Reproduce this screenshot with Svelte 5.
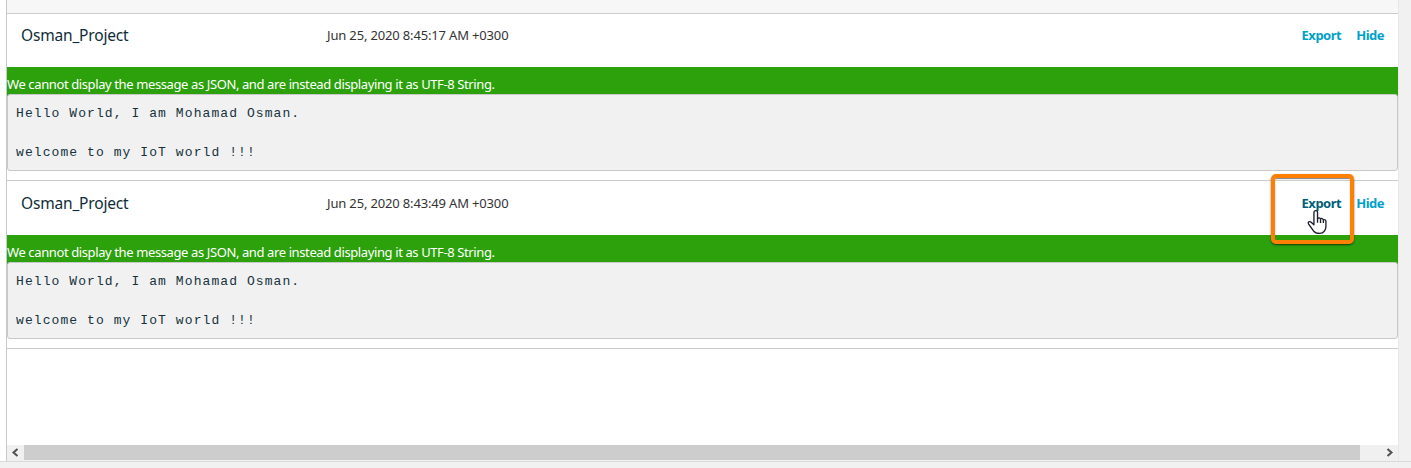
<script>
  const messages = [
    { topic: 'Osman_Project', time: 'Jun 25, 2020 8:45:17 AM +0300', active: false },
    { topic: 'Osman_Project', time: 'Jun 25, 2020 8:43:49 AM +0300', active: true }
  ];
  const body = 'Hello World, I am Mohamad Osman.\n\nwelcome to my IoT world !!!';
</script>

<div class="page">
  <div class="main">
    <div class="panel">
      <div class="strip"></div>
      {#each messages as m}
        <section class="message" class:second={m.active}>
          <header>
            <span class="topic">{m.topic}</span>
            <span class="time">{m.time}</span>
            <nav>
              <span class="link" class:active={m.active}>Export</span>
              <span class="link">Hide</span>
            </nav>
          </header>
          <div class="content">
            <p class="notice">We cannot display the message as JSON, and are instead displaying it as UTF-8 String.</p>
            <pre>{body}</pre>
          </div>
        </section>
      {/each}
      <div class="blank"></div>
      <div class="scrollbar">
        <span class="arrow"><svg width="17" height="15" viewBox="0 0 17 15"><path d="M10.5 4 6.5 7.5l4 3.5" /></svg></span>
        <span class="thumb"></span>
        <span class="arrow end"><svg width="17" height="15" viewBox="0 0 17 15"><path d="M6.5 4l4 3.5-4 3.5" /></svg></span>
      </div>
    </div>
    <div class="side"></div>
  </div>
  <footer></footer>
  <div class="highlight"></div>
  <svg class="cursor" width="22" height="27" viewBox="0 0 20 26" preserveAspectRatio="none">
    <path d="M7.2 15.2V3.4c0-2.5 3.3-2.5 3.3 0v6.2c.3-1.6 2.4-1.5 2.7.2.5-1.1 2.4-.8 2.6.8.8-.9 2.3-.3 2.3 1.3v5.2c0 1.7-.7 3.1-1.4 4.2-1 1.6-2.2 2.2-4.3 2.2-2.6 0-4.4-.6-5.6-2.5L2.4 14.5c-1.2-2 .8-3.2 2.3-1.7z" />
    <path d="M10.5 9v4.2M13.2 10v3.4M15.8 10.8v2.8" />
  </svg>
</div>

<style>
  :global(body) { margin: 0; overflow: hidden; }
  .page { position: relative; width: 1411px; height: 468px; background: #fff; font-family: "Noto Sans", sans-serif; }
  .main { display: flex; height: 461px; padding-left: 6px; }
  .panel { display: flex; flex-direction: column; box-sizing: border-box; width: 1392px; border-left: 1px solid #c9c9c9; }
  .strip { flex: none; height: 13px; background: #f7f7f7; border-bottom: 1px solid #ccc; }
  .message { display: flex; flex-direction: column; box-sizing: border-box; height: 167px; border-bottom: 1px solid #ccc; }
  .message.second { height: 168px; padding-top: 1px; }
  header { display: flex; align-items: center; height: 42px; padding: 0 14px 11px 14px; white-space: nowrap; }
  .topic { width: 306px; font-size: 15.5px; letter-spacing: -0.18px; color: #0f2d38; }
  .time { flex: 1; font-size: 13px; letter-spacing: -0.16px; color: #333; }
  nav { display: flex; gap: 15px; font-size: 13px; font-weight: 700; }
  .link { color: #00a1c9; letter-spacing: -0.5px; }
  .link.active { color: #005f7a; }
  .content { height: 103px; background: linear-gradient(#2ca10c 31px, #fff 31px); }
  .notice { margin: 0; height: 27px; line-height: 34px; font-size: 13px; letter-spacing: -0.39px; color: #fff; white-space: nowrap; }
  pre { box-sizing: border-box; height: 77px; margin: 0; padding: 9px 8px; background: #f1f1f1; border: 1px solid #c8c8c8; border-radius: 3px; font: 13px/19.5px "Liberation Mono", monospace; letter-spacing: 1.08px; color: #16323d; }
  .blank { flex: 1; }
  .scrollbar { display: flex; height: 16px; background: #f0f0f0; }
  .arrow { width: 17px; height: 16px; }
  .arrow svg { display: block; fill: none; stroke: #505050; stroke-width: 2; }
  .thumb { width: 1336px; height: 15px; background: #cdcdcd; }
  .end { margin-left: auto; }
  .side { flex: 1; background: #f1f1f1; border-left: 1px solid #e7e7e7; }
  footer { box-sizing: border-box; height: 7px; background: #f1f1f1; border-top: 1px solid #dadada; }
  .highlight { position: absolute; box-sizing: border-box; left: 1271px; top: 174px; width: 83px; height: 70px; border: 4px solid #ff7f00; border-radius: 5px; box-shadow: 0 1px 2px rgba(0,0,0,.65), inset 0 1px 1px rgba(0,0,0,.5); }
  .cursor { position: absolute; left: 1306px; top: 209px; fill: #fff; stroke: #1b1b2b; stroke-width: 1.2; stroke-linejoin: round; }
</style>
